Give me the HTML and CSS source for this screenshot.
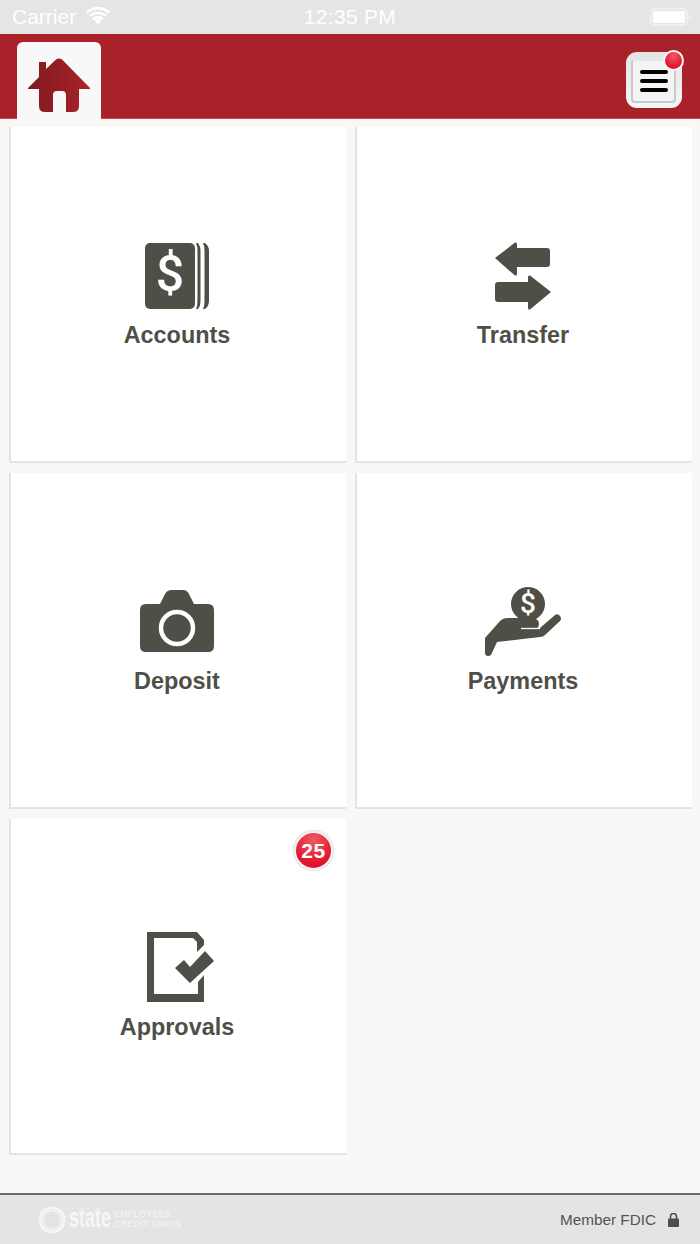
FILE: index.html
```html
<!DOCTYPE html>
<html lang="en">
<head>
<meta charset="utf-8">
<title>Home</title>
<link rel="stylesheet" href="styles.css">
</head>
<body>
<div class="app">
  <div class="status">
    <div class="status-left">
      <span class="carrier">Carrier</span>
      <svg class="wifi" width="26" height="19" viewBox="0 0 26 19"><path d="M13 18.500 9.200 14.300a5.500 5.500 0 0 1 7.600 0Z" fill="#fff"/><path d="M7.200 12.300A8.400 8.400 0 0 1 18.800 12.300L17.300 13.900A6.200 6.200 0 0 0 8.700 13.900Z" fill="#fff"/><path d="M4.200 9.200A12.800 12.800 0 0 1 21.800 9.200L20.300 10.800A10.600 10.600 0 0 0 5.700 10.800Z" fill="#fff"/><path d="M.8 5.800A17.600 17.600 0 0 1 25.200 5.800L23.300 7.700A15 15 0 0 0 2.700 7.700Z" fill="#fff"/></svg>
    </div>
    <span class="clock">12:35 PM</span>
    <div class="battery"><span class="battery-body"><span class="battery-fill"></span></span><span class="battery-cap"></span></div>
  </div>

  <header class="topbar">
    <div class="home-tab">
      <svg width="62" height="54" viewBox="0 0 62 54">
        <defs><linearGradient id="roof" x1="0" x2="1" y1="0" y2="0"><stop offset="0" stop-color="#7f1a1f"/><stop offset="1" stop-color="#aa2229"/></linearGradient></defs>
        <path d="M0 30 11 19V4H18V11L28 1.500Q31 -.5 34 1.500L62 30V31H51V48Q51 54 45 54H38V37Q38 33 34 33H29Q25 33 25 37V54H17Q11 54 11 48V31H0Z" fill="url(#roof)"/>
      </svg>
    </div>
    <button class="menu-btn" type="button" aria-label="Menu">
      <span class="menu-inner"><i></i><i></i><i></i></span>
      <span class="menu-dot"></span>
    </button>
  </header>

  <main class="grid">
    <a class="tile">
      <svg class="icon" width="66" height="68" viewBox="0 0 66 68">
        <rect x="1" y="1" width="50" height="66" rx="5" fill="#4f4f47"/>
        <path d="M52 1Q53.500 4 53.500 9V59Q53.500 64 52 67L54 67Q56.500 64 56.500 59V9Q56.500 4 54 1ZM59 1Q60.500 4 60.500 9V59Q60.500 64 59 67L61 67Q65 64 65 59V9Q65 4 61 1Z" fill="#4f4f47"/>
        <text class="dollar" x="26" y="49" text-anchor="middle">$</text>
      </svg>
      <span class="label">Accounts</span>
    </a>
    <a class="tile">
      <svg class="icon" width="56" height="68" viewBox="0 0 56 68">
        <path d="M0 16 20 .5Q22 0 22 2V6H52Q55 6 55 9V22Q55 25 52 25H22V32Q22 34 20 33.500Z" fill="#4f4f47"/>
        <path d="M56 50 35 67.500Q33 68 33 66V60H3Q0 60 0 57V43Q0 40 3 40H33V35Q33 33 35 33.500Z" fill="#4f4f47"/>
      </svg>
      <span class="label">Transfer</span>
    </a>
    <a class="tile">
      <svg class="icon" width="74" height="68" viewBox="0 0 74 68">
        <g transform="translate(0 2)">
          <path d="M6 14H20L25 4Q27 0 32 0H43Q47 0 49 4L54 14H68Q74 14 74 20V56Q74 62 68 62H6Q0 62 0 56V20Q0 14 6 14Z" fill="#4f4f47"/>
          <circle cx="37" cy="38" r="16" fill="none" stroke="#fff" stroke-width="4.500"/>
        </g>
      </svg>
      <span class="label">Deposit</span>
    </a>
    <a class="tile">
      <svg class="icon" width="76" height="68" viewBox="0 0 76 68">
        <g transform="translate(0 -1)">
          <circle cx="43" cy="17" r="17" fill="#4f4f47"/>
          <text class="dollar-sm" x="43" y="26" text-anchor="middle">$</text>
          <path d="M0 51 15 34Q18 31 23 31H48Q54 32 54 37 54 40 52 41H55L70 28Q73 26 75 29 77 32 75 34L60 48Q58 50 55 50L12 55 6 68Q5 69 3 69 0 69 0 66Z" fill="#4f4f47"/>
          <path d="M36 41.500H55" stroke="#fff" stroke-width="1.300" fill="none"/>
        </g>
      </svg>
      <span class="label">Payments</span>
    </a>
    <a class="tile">
      <span class="count">25</span>
      <svg class="icon" width="60" height="68" viewBox="0 0 60 68">
        <g transform="translate(0 -2)">
          <path d="M0 0H50L57 8V13L50 20V10L46 6H7V62H51V50L57 43V70H0Z" fill="#4f4f47"/>
          <path d="M28 36 37 28 43 35 58 19 67 29 43 51Z" fill="#4f4f47"/>
        </g>
      </svg>
      <span class="label">Approvals</span>
    </a>
  </main>

  <footer class="footer">
    <div class="brand">
      <svg width="28" height="28" viewBox="0 0 28 28"><circle cx="14" cy="14" r="11" fill="none" stroke="#f8f8f8" stroke-width="5" stroke-dasharray="3 .6"/><circle cx="14" cy="14" r="10.300" fill="none" stroke="#e4e4e4" stroke-width=".7"/></svg>
      <span class="brand-state">state</span>
      <span class="brand-sub">EMPLOYEES<br>CREDIT UNION</span>
    </div>
    <div class="fdic">
      <span>Member FDIC</span>
      <svg width="11" height="14" viewBox="0 0 11 14"><path d="M2.500 6V3.500a3 3 0 0 1 6 0V6" fill="none" stroke="#4f4f47" stroke-width="1.600"/><rect x="0" y="5.500" width="11" height="8.500" rx="1" fill="#4f4f47"/></svg>
    </div>
  </footer>
</div>
</body>
</html>
```

FILE: styles.css
```css
* { box-sizing: border-box; }

html, body {
  margin: 0;
  height: 100%;
}

body {
  font-family: "Liberation Sans", Arial, sans-serif;
  background: #f8f8f8;
  color: #4f4f47;
}

.app {
  width: 700px;
  height: 1244px;
  display: flex;
  flex-direction: column;
  overflow: hidden;
}

/* Status bar */
.status {
  height: 34px;
  flex: none;
  background: #e5e5e5;
  color: #fff;
  display: grid;
  grid-template-columns: 1fr auto 1fr;
  align-items: center;
  padding: 0 9px;
}

.status-left {
  display: flex;
  align-items: center;
  gap: 9px;
  padding-left: 3px;
}

.carrier { font-size: 21px; }

.wifi { margin-top: -3px; }

.clock {
  font-size: 21px;
  letter-spacing: .3px;
}

.battery {
  justify-self: end;
  display: flex;
  align-items: center;
  gap: 1px;
}

.battery-body {
  width: 38px;
  height: 18px;
  border: 2px solid #f0f0f0;
  border-radius: 5px;
  padding: 1px;
  display: block;
}

.battery-fill {
  display: block;
  width: 100%;
  height: 100%;
  background: #fff;
  border-radius: 2px;
}

.battery-cap {
  width: 2px;
  height: 6px;
  background: #f0f0f0;
  border-radius: 0 2px 2px 0;
}

/* Red bar */
.topbar {
  height: 85px;
  flex: none;
  background: #a9222a;
  border-bottom: 1px solid #c94a50;
  padding: 8px 18px 0 17px;
  display: flex;
  justify-content: space-between;
  align-items: flex-start;
}

.home-tab {
  width: 84px;
  height: 77px;
  background: #f8f8f8;
  border-radius: 6px 6px 0 0;
  padding: 16px 0 0 11px;
}

.home-tab svg { display: block; }

.menu-btn {
  position: relative;
  width: 56px;
  height: 56px;
  margin-top: 10px;
  padding: 7px 6px 5px 5px;
  border: 0;
  border-radius: 11px;
  background: linear-gradient(#e4e4e4, #f6f6f6);
  display: block;
}

.menu-inner {
  width: 100%;
  height: 100%;
  display: flex;
  flex-direction: column;
  justify-content: center;
  align-items: center;
  gap: 5px;
  background: #f4f4f4;
  border: 2px solid #c9c9c9;
  border-top-color: #e6e6e6;
  border-radius: 4px;
}

.menu-inner i {
  width: 28px;
  height: 4px;
  background: #000;
  border-radius: 2px;
}

.menu-dot {
  position: absolute;
  top: -2px;
  right: -2px;
  width: 21px;
  height: 21px;
  border-radius: 50%;
  border: 2px solid #f6f6f6;
  background: radial-gradient(circle at 50% 25%, #ee5a64, #e2142d 70%);
}

/* Tiles */
.grid {
  flex: 1;
  display: grid;
  grid-template-columns: 337px 337px;
  grid-auto-rows: 336px;
  gap: 10px 9px;
  padding: 8px 0 0 9px;
  align-content: start;
}

.tile {
  position: relative;
  background: #fff;
  border-left: 2px solid #e4e4e4;
  border-bottom: 2px solid #e4e4e4;
  padding: 7px 3px 0 0;
  display: flex;
  flex-direction: column;
  align-items: center;
  justify-content: center;
}

.icon {
  display: block;
  flex: none;
  overflow: visible;
}

.label {
  font-size: 23.400px;
  font-weight: 700;
  line-height: 36px;
  margin-top: 7px;
  color: #4f4f47;
}

.dollar {
  font-family: Roboto, "Liberation Sans", sans-serif;
  font-weight: 500;
  font-size: 50px;
  fill: #fff;
}

.dollar-sm {
  font-family: Roboto, "Liberation Sans", sans-serif;
  font-weight: 500;
  font-size: 28px;
  fill: #fff;
}

.count {
  position: absolute;
  top: 12px;
  right: 13px;
  width: 39px;
  height: 39px;
  border-radius: 50%;
  border: 2px solid #f2f2f2;
  box-shadow: 0 0 2px #999;
  background: radial-gradient(circle at 50% 20%, #ee5a64, #e2142d 70%);
  color: #fff;
  font-size: 21px;
  font-weight: 700;
  letter-spacing: .5px;
  display: flex;
  align-items: center;
  justify-content: center;
}

/* Footer */
.footer {
  height: 51px;
  flex: none;
  background: #e4e4e4;
  border-top: 2px solid #6f6f68;
  display: flex;
  justify-content: space-between;
  align-items: center;
  padding: 0 21px 0 38px;
}

.brand {
  display: flex;
  align-items: center;
  color: #f6f6f6;
}

.brand-state {
  font-size: 27px;
  font-weight: 700;
  transform: scaleX(.667);
  transform-origin: left center;
  margin: -3px -18px 0 3px;
}

.brand-sub {
  font-size: 8.500px;
  line-height: 9.500px;
  letter-spacing: .5px;
}

.fdic {
  display: flex;
  align-items: center;
  gap: 12px;
  font-size: 15.300px;
  color: #55554e;
}

.fdic svg { display: block; }
```
